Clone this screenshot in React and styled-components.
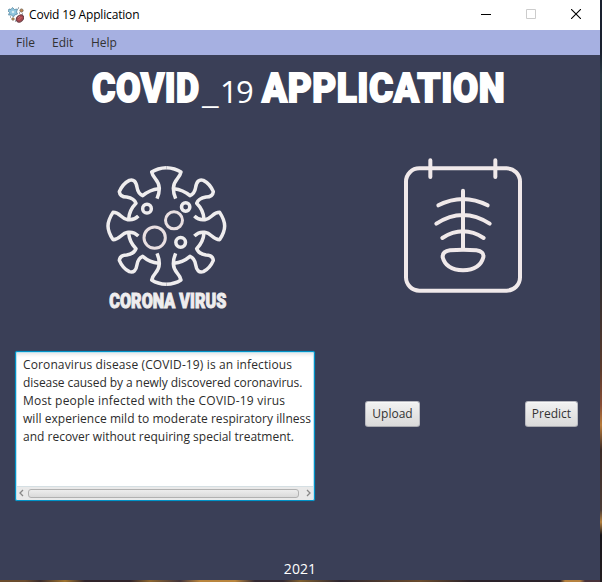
import React from "react";
import styled, { createGlobalStyle } from "styled-components";

const GlobalStyle = createGlobalStyle`
  * { box-sizing: border-box; }
  body { margin: 0; overflow: hidden; }
`;

const Desktop = styled.div`
  width: 602px;
  height: 582px;
  padding: 0 2px 2px 0;
  background:
    linear-gradient(180deg, #19202e 0 52px, #2a3a45 75px, #1e2833 250px, #5b3a2c 370px, #874d35 405px, #b87b3b 425px, #3b2a26 450px, #4a3b36 510px, #b5813f 522px, #17151a 535px, #241d20 100%) right / 2px 100% no-repeat,
    linear-gradient(90deg, #6b4c2d 0 25px, #3a2b2b 40px, #a0742f 65px, #30242a 85px 130px, #8d662f 150px, #42333a 180px, #b9853d 200px 235px, #332932 255px 283px, #80602f 300px, #2c2530 340px, #6b4c2d 420px, #2a222a 470px 560px, #b5813f 565px 580px, #49323a 585px);
`;

const Window = styled.main`
  display: flex;
  flex-direction: column;
  width: 600px;
  height: 580px;
  background: #3a3f57;
  font-family: "Open Sans", "Noto Sans", sans-serif;
`;

const TitleBar = styled.header`
  display: flex;
  align-items: center;
  height: 30px;
  padding-left: 8px;
  background: #fff;
  color: #000;
  font-size: 12px;
`;

const Caption = styled.span`
  margin-left: 5px;
  letter-spacing: -0.17px;
  line-height: 30px;
`;

const WindowControls = styled.div`
  display: flex;
  gap: 35px;
  margin: -2px 19px 0 auto;
`;

const MenuBar = styled.nav`
  display: flex;
  gap: 18px;
  height: 25px;
  padding-left: 16px;
  background: #a6b0e1;
  color: #323232;
  font-size: 12px;
  line-height: 25px;
`;

const MenuItem = styled.span`
  width: ${(p) => p.$width}px;
  white-space: nowrap;
`;

const Heading = styled.h1`
  display: flex;
  align-items: flex-start;
  height: 66px;
  margin: 0;
  padding: 12px 0 0 92px;
  color: #fff;
  font-weight: 400;
`;

const HeadingWord = styled.span`
  width: ${(p) => p.$width}px;
  font: 900 41px/42px Roboto, sans-serif;
  letter-spacing: 0.6px;
  white-space: nowrap;
  transform: scaleX(${(p) => p.$scale});
  transform-origin: left;
  -webkit-text-stroke: 1.8px #fff;
`;

const HeadingNumber = styled.span`
  width: 60px;
  padding-top: 4px;
  font-size: 31px;
  line-height: 40px;
  letter-spacing: -1.8px;
  white-space: nowrap;
`;

const Underscore = styled.span`
  display: inline-block;
  letter-spacing: 0;
  transform: scaleX(1.22);
  transform-origin: left;
  width: 18px;
`;

const Pictures = styled.section`
  display: flex;
  justify-content: space-between;
  height: 230px;
  padding: 29px 65px 0 95px;
`;

const VirusDrawing = styled.svg`
  margin-top: 5px;
  overflow: visible;
`;

const Controls = styled.section`
  display: flex;
  align-items: flex-start;
  height: 150px;
  padding-left: 15px;
`;

const TextArea = styled.div`
  display: flex;
  flex-direction: column;
  width: 300px;
  height: 150px;
  border: 1px solid #0093c7;
  border-radius: 2px;
  background: #fff;
  box-shadow: 0 0 1px #0093c7, inset 0 0 0 1px #b9e2f1, inset 0 4px 4px -2px #ddd;
`;

const Copy = styled.div`
  flex: 1;
  padding: 4px 0 0 7px;
  color: #2c2c2c;
  font: 12px/18px "Open Sans", sans-serif;
`;

const Line = styled.div`
  white-space: nowrap;
  letter-spacing: ${(p) => p.$track}px;
`;

const ScrollBar = styled.div`
  display: flex;
  align-items: center;
  height: 14px;
  margin: 0 1px;
  padding: 0 2px 1px;
  border-top: 1px solid #d5dfe3;
  background: #e9e9e9;
`;

const Thumb = styled.div`
  width: 271px;
  height: 9px;
  margin: 0 7px 0 4px;
  border: 1px solid #b1b1b1;
  border-radius: 3px;
  background: linear-gradient(#ededed, #dadada);
`;

const Button = styled.button`
  width: ${(p) => p.$width}px;
  height: 26px;
  margin: 50px 0 0 ${(p) => p.$offset}px;
  padding: 0;
  border: 1px solid #b9bac1;
  border-bottom-color: #a8a9af;
  border-radius: 3px;
  background: linear-gradient(#f2f2f2, #d9d9d9);
  box-shadow: inset 0 1px #f8f8f8;
  color: #333;
  font: 12px/22px "Open Sans", sans-serif;
  letter-spacing: ${(p) => p.$track}px;
`;

const Footer = styled.footer`
  margin-top: auto;
  height: 22px;
  color: #fff;
  font-size: 14px;
  line-height: 22px;
  letter-spacing: 0.1px;
  text-align: center;
`;

const AppIcon = () => (
  <svg width="16" height="16" viewBox="0 0 16 16">
    <path d="M1 2l2 .5 1.5-2 2 2 3-.5-1 3 1 2-3 1-1 2-2-2-3 0 1-2.500-1.500-1.500z" fill="#8fc5dd" stroke="#5d8ca3" strokeWidth=".8" />
    <circle cx="5" cy="5" r="1.3" fill="#d6edf3" />
    <ellipse cx="12" cy="11.5" rx="4" ry="3" transform="rotate(-40 12 11.5)" fill="#a8474d" stroke="#673a42" />
    <path d="M10.500 13l3-3M10 11l2-2" stroke="#d07f7b" strokeWidth=".8" />
    <circle cx="13.500" cy="3.500" r="1.600" fill="#c6874d" stroke="#6d6254" strokeWidth=".8" />
    <circle cx="5" cy="12" r="1.300" fill="#c69856" stroke="#716556" strokeWidth=".6" />
    <path d="M10 1h1M14 7h1M7 14h1M2 10h1M11 6h1" stroke="#59656d" />
  </svg>
);

const Quadrant = ({ transform }) => (
  <g transform={transform}>
    <path d="M214 38Q240 39 258 51C254 72 236 72 235 100Q235 115 242 131" />
    <path d="M237 101Q264 104 285 122Q299 116 302 97Q306 70 325 76Q345 86 355 110Q353 126 333 126Q310 130 305 145Q325 165 327 192" />
    <path d="M298 183Q312 197 330 194C350 192 352 172 374 172Q389 195 389 213" />
  </g>
);

const Virus = () => (
  <VirusDrawing width="145" height="160" viewBox="0 0 435 480">
    <g fill="none" stroke="#efedee" strokeWidth="10.5" strokeLinejoin="round">
      <Quadrant />
      <Quadrant transform="translate(428 0) scale(-1 1)" />
      <Quadrant transform="translate(0 426) scale(1 -1)" />
      <Quadrant transform="translate(428 426) scale(-1 -1)" />
      <circle cx="156" cy="161" r="13" />
      <circle cx="272" cy="156" r="12.5" />
      <circle cx="257" cy="262" r="14.5" />
      <g stroke="#e9dfe1" strokeWidth="9">
        <circle cx="237" cy="196" r="25.5" />
        <circle cx="179" cy="248" r="32" />
      </g>
    </g>
    <text x="43" y="458" textLength="351" lengthAdjust="spacingAndGlyphs" fill="#efedee" stroke="#efedee" strokeWidth="3" fontFamily="Roboto, sans-serif" fontWeight="900" fontSize="61">CORONA VIRUS</text>
  </VirusDrawing>
);

const Scan = () => (
  <svg width="140" height="150" viewBox="0 0 420 450">
    <g fill="none" stroke="#f0e9ea" strokeWidth="12" strokeLinecap="round" strokeLinejoin="round">
      <rect x="33" y="55" width="342" height="367" rx="40" />
      <path d="M106 31V81M301 31V81M204 122V298M130 166Q204 128 278 166M124 221Q204 169 284 221M142 264Q204 224 266 264" />
      <path d="M165 301Q204 297 244 301Q268 304 265 322Q255 360 204 361Q153 360 143 322Q142 304 165 301Z" />
    </g>
  </svg>
);

const Arrow = ({ d }) => (
  <svg width="5" height="8" viewBox="0 0 5 8"><path d={d} fill="none" stroke="#888" strokeWidth="1.3" /></svg>
);

const LINES = [
  ["Coronavirus disease (COVID-19) is an infectious", 0.12],
  ["disease caused by a newly discovered coronavirus.", -0.07],
  ["Most people infected with the COVID-19 virus", 0.2],
  ["will experience mild to moderate respiratory illness", 0.04],
  ["and recover without requiring special treatment.", 0],
];

export default function App() {
  return (
    <Desktop>
      <GlobalStyle />
      <Window>
        <TitleBar>
          <AppIcon />
          <Caption>Covid 19 Application</Caption>
          <WindowControls>
            <svg width="10" height="10"><path d="M0 5.5H10" stroke="#000" /></svg>
            <svg width="10" height="10"><path d="M.5 .5H9.5V9.5H.5Z" fill="none" stroke="#ccc" /></svg>
            <svg width="10" height="10"><path d="M0 0L10 10M10 0L0 10" stroke="#000" strokeWidth="1.1" /></svg>
          </WindowControls>
        </TitleBar>
        <MenuBar>
          <MenuItem $width={18}>File</MenuItem>
          <MenuItem $width={21}>Edit</MenuItem>
          <MenuItem $width={25}>Help</MenuItem>
        </MenuBar>
        <Heading>
          <HeadingWord $width={110} $scale={0.87}>COVID</HeadingWord>
          <HeadingNumber><Underscore>_</Underscore>19</HeadingNumber>
          <HeadingWord $width={244} $scale={0.9}>APPLICATION</HeadingWord>
        </Heading>
        <Pictures>
          <Virus />
          <Scan />
        </Pictures>
        <Controls>
          <TextArea>
            <Copy>
              {LINES.map(([text, track]) => <Line key={text} $track={track}>{text}</Line>)}
            </Copy>
            <ScrollBar>
              <Arrow d="M4 1L1 4L4 7" />
              <Thumb />
              <Arrow d="M1 1L4 4L1 7" />
            </ScrollBar>
          </TextArea>
          <Button $width={55} $offset={50} $track={0}>Upload</Button>
          <Button $width={53} $offset={105} $track={0}>Predict</Button>
        </Controls>
        <Footer>2021</Footer>
      </Window>
    </Desktop>
  );
}
